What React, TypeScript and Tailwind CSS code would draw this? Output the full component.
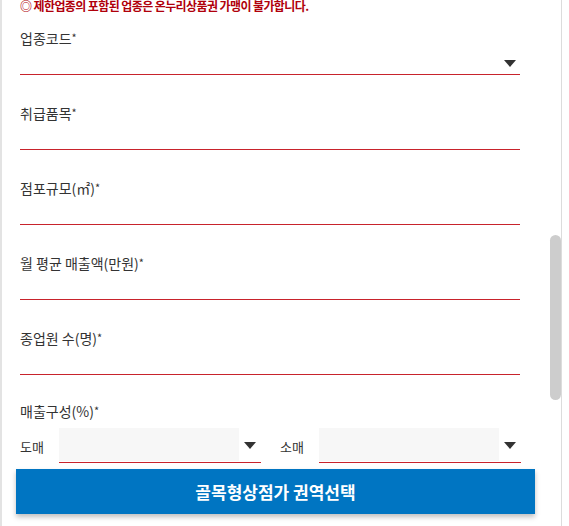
import React from "react";

const FONT = { fontFamily: '"Noto Sans CJK KR", "Noto Sans", sans-serif' };

const fields = [
  { label: "업종코드", select: true },
  { label: "취급품목" },
  { label: "점포규모(㎡)" },
  { label: "월 평균 매출액(만원)" },
  { label: "종업원 수(명)" },
];

const Caret = () => (
  <svg width="12" height="7" viewBox="0 0 12 7" className="shrink-0">
    <polygon points="0,0 12,0 6,7" fill="#333333" />
  </svg>
);

const Label = ({ text }: { text: string }) => (
  <p className="h-5 text-[14px] leading-5 text-[#333]">
    {text}
    <span className="relative -top-[2px] text-[11px]">*</span>
  </p>
);

interface IField {
  label: string;
  select?: boolean;
}

const Field = ({ label, select }: IField) => (
  <div className="flex flex-col">
    <Label text={label} />
    <div className="flex h-[27px] items-center justify-end border-b border-[#c8232c] pr-[4px] pt-[4px]">
      {select && <Caret />}
    </div>
  </div>
);

const SmallSelect = ({ label }: { label: string }) => (
  <div className="flex items-center">
    <span className="w-[39px] pt-[2px] text-[13px] text-[#333]">{label}</span>
    <div className="flex h-[35px] w-[202px] border-b border-[#c8232c] pb-[1px]">
      <div className="w-[180px] bg-[#f7f7f7]" />
      <div className="flex flex-1 items-center justify-center pt-[2px]">
        <Caret />
      </div>
    </div>
  </div>
);

export default function App() {
  return (
    <div className="relative flex h-[526px] w-[569px] overflow-hidden bg-white" style={FONT}>
      <div className="w-[2px] shrink-0 bg-[#e3e3e3]" />
      <div className="flex w-[559px] shrink-0 flex-col">
        <p className="-mt-[2px] pl-[18px] text-[12px] font-bold leading-4 tracking-[-0.6px] text-[#b0000b]">
          ◎ 제한업종의 포함된 업종은 온누리상품권 가맹이 불가합니다.
        </p>
        <div className="mt-[14px] flex w-[518px] flex-col gap-[28px] pl-[18px]">
          {fields.map((f) => (
            <Field key={f.label} label={f.label} select={f.select} />
          ))}
        </div>
        <div className="mt-[26px] pl-[18px]">
          <Label text="매출구성(%)" />
          <div className="mt-[7px] flex gap-[19px]">
            <SmallSelect label="도매" />
            <SmallSelect label="소매" />
          </div>
        </div>
        <button className="ml-[14px] mt-[6px] flex h-[45px] w-[519px] items-center justify-center bg-[#0075c2] text-[17px] font-bold text-white shadow-[0_3px_5px_rgba(0,0,0,0.25)]">
          골목형상점가 권역선택
        </button>
      </div>
      <div className="w-px shrink-0 bg-[#dcdcdc]" />
      {/* scrollbar thumb */}
      <div className="absolute left-[550px] top-[235px] h-[165px] w-[11px] rounded-[6px] bg-[#cdcdcd]" />
    </div>
  );
}
